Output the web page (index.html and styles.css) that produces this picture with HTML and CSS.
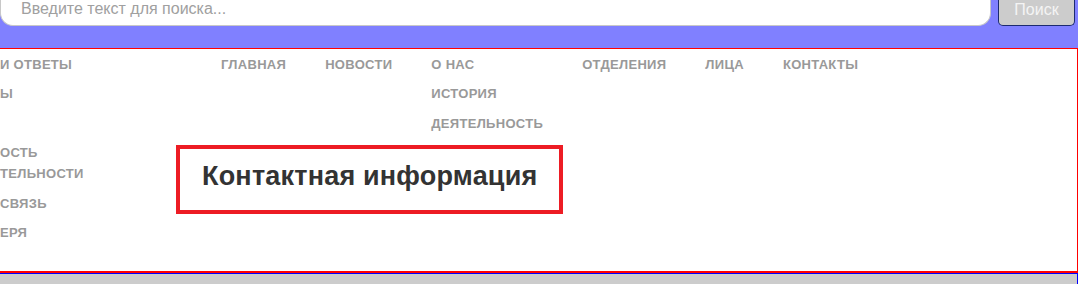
FILE: index.html
```html
<!doctype html>
<html>
<head>
    <meta charset='utf-8'>
    <title>Контактная информация</title>
    <link rel="stylesheet" href="styles.css">
</head>
<body>
<div class='top'>
    <form class='search'>
        <input class='search-field' type='text' placeholder='Введите текст для поиска...'>
        <button class='search-btn' type='button'>Поиск</button>
    </form>
</div>
<div class='page'>
    <div class='side'>
        <ul class='side-menu'>
            <li>И ОТВЕТЫ</li>
            <li>Ы</li>
            <li>&nbsp;</li>
            <li>ОСТЬ<br>ТЕЛЬНОСТИ</li>
            <li>СВЯЗЬ</li>
            <li>ЕРЯ</li>
        </ul>
    </div>
    <div class='content'>
        <ul class='menu'>
            <li>ГЛАВНАЯ</li>
            <li>НОВОСТИ</li>
            <li>О НАС
                <ul class='submenu'>
                    <li>ИСТОРИЯ</li>
                    <li>ДЕЯТЕЛЬНОСТЬ</li>
                </ul>
            </li>
            <li>ОТДЕЛЕНИЯ</li>
            <li>ЛИЦА</li>
            <li>КОНТАКТЫ</li>
        </ul>
        <h1 class='title'>Контактная информация</h1>
    </div>
</div>
<div class='foot'></div>
</body>
</html>
```

FILE: styles.css
```css
*{margin:0;padding:0;box-sizing:border-box;}
body{font-family:"Liberation Sans",Arial,sans-serif;background:#fff;overflow:hidden;}
ul{list-style:none;}

/* шапка с поиском */
.top{height:48px;background:#8080ff;}
.search{display:flex;gap:7px;padding-right:3px;}
.search-field{flex:1;height:26px;border:1px solid #c8c8c8;border-top:none;border-radius:0 0 13px 13px;background:#fff;padding:0 0 8px 20px;font:16px/17px "Liberation Sans",Arial,sans-serif;color:#333;outline:none;}
.search-field::placeholder{color:#a0a0a0;}
.search-btn{width:77px;height:26px;background:#ccc;border:1px solid #1c2a70;border-top:none;border-radius:0 0 5px 5px;color:#f4f4f4;font:16px/17px "Liberation Sans",Arial,sans-serif;padding-bottom:7px;}

/* основной блок */
.page{display:flex;min-height:225px;border:1px solid #f00;border-left:none;border-bottom-width:2px;}
.side{width:176px;}
.side-menu li,.menu li{font-size:13px;line-height:21px;font-weight:bold;letter-spacing:0.3px;color:#999;padding:4.5px 0 4px;}
.content{flex:1;}
.menu{display:flex;padding-left:25.5px;}
.menu>li{padding-left:19.5px;padding-right:19.5px;}
.submenu{margin-top:4px;}
.submenu li{padding-left:0;padding-right:0;}
.title{display:inline-block;margin-top:3.5px;border:4px solid #ed1c24;padding:12px 22px 18px;font-size:27px;line-height:31px;letter-spacing:0.2px;color:#333;}

.foot{height:20px;background:#ccc;border-top:1px solid #00f;border-right:1px solid #00f;}
```
